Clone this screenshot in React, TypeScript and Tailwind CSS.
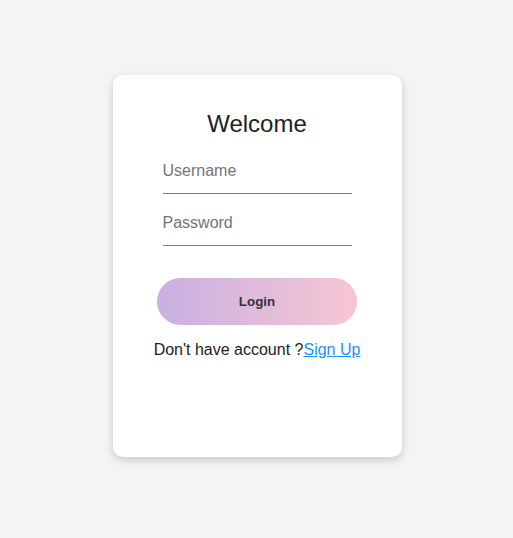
import React, { useState } from "react";

export default function App() {
  const [user, setUser] = useState({ username: "", password: "" });

  return (
    <div className="min-h-screen bg-[#f4f4f4] flex justify-center pt-[75px] pl-[1px] font-['Liberation_Sans',Arial,sans-serif]">
      <div className="w-[289px] h-[382px] bg-white rounded-[10px] shadow-[0_3px_8px_rgba(0,0,0,0.18)] flex flex-col items-center pt-[35px] box-border">
        <h1 className="text-[24px] leading-[27px] text-[#222]">Welcome</h1>

        <div className="w-[189px] mt-[17px] flex flex-col gap-[12px]">
          <input
            type="text"
            value={user.username}
            onChange={(e) => setUser({ ...user, username: e.target.value })}
            placeholder="Username"
            className="block w-full h-[40px] pt-[5px] pb-[11px] border-b border-[#2a8cf0] text-[16px] text-[#222] placeholder:text-[#757575] outline-none bg-transparent"
          />
          <input
            type="password"
            value={user.password}
            onChange={(e) => setUser({ ...user, password: e.target.value })}
            placeholder="Password"
            className="block w-full h-[40px] pt-[5px] pb-[11px] border-b border-[#2a8cf0] text-[16px] text-[#222] placeholder:text-[#757575] outline-none bg-transparent"
          />
        </div>

        <button className="mt-[32px] w-[200px] h-[47px] rounded-full bg-[linear-gradient(to_right,#c8b0e1,#f7c5d4)] text-[13.333px] font-bold text-[#333]">
          Login
        </button>

        <p className="mt-[16px] text-[16px] leading-[18px] text-[#222]">
          Don't have account ?<a href="#" className="text-[#1e90ff] underline">Sign Up</a>
        </p>
      </div>
    </div>
  );
}
